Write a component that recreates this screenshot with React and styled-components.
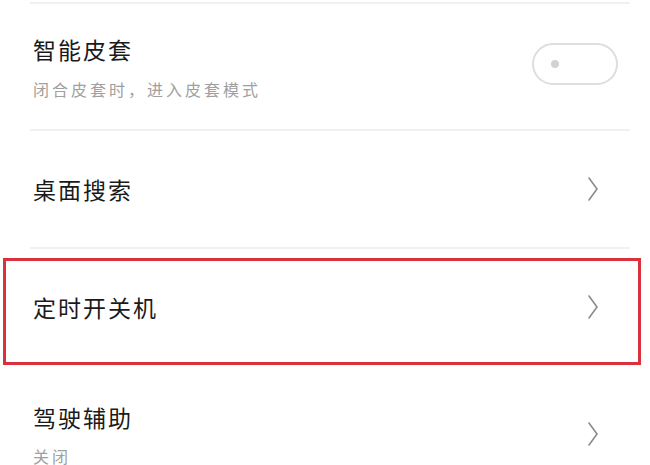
import styled, { createGlobalStyle } from "styled-components";

const GlobalStyle = createGlobalStyle`
    html, body {
        margin: 0;
        padding: 0;
        background: #ffffff;
    }
    body {
        font-family: "Noto Sans CJK SC", "Noto Sans", sans-serif;
        color: #222222;
    }
`;

const items = [
    { title: "智能皮套", sub: "闭合皮套时，进入皮套模式", toggle: true, height: 125, gap: 13 },
    { title: "桌面搜索", height: 116 },
    { title: "定时开关机", height: 107, marked: true, padBottom: 10 },
    { title: "驾驶辅助", sub: "关闭", height: 110, padTop: 28, gap: 12 },
];

function Chevron() {
    return (
        <svg width="14" height="26" viewBox="0 0 14 26" fill="none">
            <path d="M3 2 L11 13 L3 24" stroke="#8a8a8a" strokeWidth="1.6" strokeLinecap="round" strokeLinejoin="round" />
        </svg>
    );
}

function App() {
    return (
        <>
            <GlobalStyle />
            <Page>
                <Divider />
                {items.map((item, idx) => (
                    <div key={idx}>
                        <Row
                            $height={item.height}
                            $marked={item.marked}
                            $padTop={item.padTop || 0}
                            $padBottom={item.padBottom || 0}
                        >
                            <Texts $gap={item.gap || 0}>
                                <Title>{item.title}</Title>
                                {item.sub && <Sub>{item.sub}</Sub>}
                            </Texts>
                            {item.toggle ? (
                                <Toggle>
                                    <Knob />
                                </Toggle>
                            ) : (
                                <Arrow>
                                    <Chevron />
                                </Arrow>
                            )}
                        </Row>
                        {idx < 2 && <Divider />}
                        {idx === 1 && <Gap />}
                    </div>
                ))}
            </Page>
        </>
    );
}

const Page = styled.div`
    width: 650px;
    height: 465px;
    overflow: hidden;
    padding-top: 2px;
    box-sizing: border-box;
`;

const Divider = styled.div`
    height: 2px;
    margin: 0 20px 0 30px;
    background: #f0f0f0;
`;

const Gap = styled.div`
    height: 9px;
`;

const Row = styled.div`
    display: flex;
    align-items: center;
    justify-content: space-between;
    box-sizing: border-box;
    height: ${(p) => p.$height}px;
    margin: 0 9px 0 3px;
    padding-top: ${(p) => p.$padTop}px;
    padding-bottom: ${(p) => p.$padBottom}px;
    padding-left: ${(p) => (p.$marked ? "27px" : "30px")};
    padding-right: ${(p) => (p.$marked ? "38px" : "41px")};
    border: ${(p) => (p.$marked ? "3px solid #d9323c" : "none")};
`;

const Texts = styled.div`
    display: flex;
    flex-direction: column;
    gap: ${(p) => p.$gap}px;
`;

const Title = styled.div`
    font-size: 23px;
    letter-spacing: 2px;
    color: #1a1a1a;
    line-height: 32px;
`;

const Sub = styled.div`
    font-size: 16px;
    letter-spacing: 3px;
    color: #a0a0a0;
    line-height: 22px;
`;

const Toggle = styled.div`
    width: 86px;
    height: 42px;
    box-sizing: border-box;
    border: 2px solid #dedede;
    border-radius: 21px;
    display: flex;
    align-items: center;
    padding-left: 17px;
    margin-right: -18px;
    margin-bottom: 6px;
`;

const Knob = styled.div`
    width: 8px;
    height: 8px;
    border-radius: 50%;
    background: #d2d2d2;
`;

const Arrow = styled.div`
    display: flex;
    align-items: center;
`;

export default App;
